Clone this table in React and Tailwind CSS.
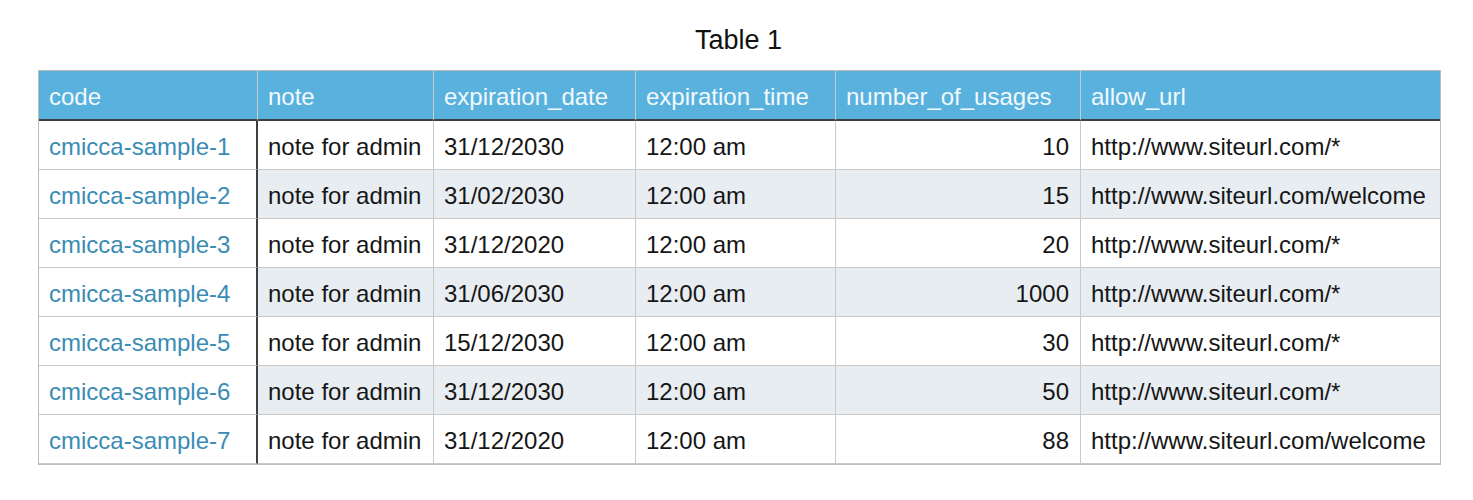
import React from 'react'

const columns = [
  { key: 'code', label: 'code', width: 'w-[219px]' },
  { key: 'note', label: 'note', width: 'w-[176px]' },
  { key: 'date', label: 'expiration_date', width: 'w-[202px]' },
  { key: 'time', label: 'expiration_time', width: 'w-[200px]' },
  { key: 'uses', label: 'number_of_usages', width: 'w-[245px]' },
  { key: 'url', label: 'allow_url', width: 'w-[359px]' },
]

const rows = [
  ['cmicca-sample-1', 'note for admin', '31/12/2030', '12:00 am', '10', 'http://www.siteurl.com/*'],
  ['cmicca-sample-2', 'note for admin', '31/02/2030', '12:00 am', '15', 'http://www.siteurl.com/welcome'],
  ['cmicca-sample-3', 'note for admin', '31/12/2020', '12:00 am', '20', 'http://www.siteurl.com/*'],
  ['cmicca-sample-4', 'note for admin', '31/06/2030', '12:00 am', '1000', 'http://www.siteurl.com/*'],
  ['cmicca-sample-5', 'note for admin', '15/12/2030', '12:00 am', '30', 'http://www.siteurl.com/*'],
  ['cmicca-sample-6', 'note for admin', '31/12/2030', '12:00 am', '50', 'http://www.siteurl.com/*'],
  ['cmicca-sample-7', 'note for admin', '31/12/2020', '12:00 am', '88', 'http://www.siteurl.com/welcome'],
]

function Cell({ col, value, striped }) {
  if (col === 0) {
    return (
      <td className="h-[49px] border-r-[2px] border-b border-r-[#3f3f3f] border-b-[#c9c9c9] bg-white pt-[4px] pl-[10px] text-[#3a8cb4]">
        {value}
      </td>
    )
  }
  return (
    <td
      className={
        (striped ? 'bg-[#e8edf2] ' : 'bg-white ') +
        (col === 4 ? 'pr-[11px] text-right ' : 'pl-[10px] ') +
        (col === 5 ? 'border-b border-b-[#c9c9c9] ' : 'border-r border-b border-[#c9c9c9] ') +
        'h-[49px] whitespace-nowrap pt-[4px] text-[#161616]'
      }
    >
      {value}
    </td>
  )
}

export default function App() {
  return (
    <div className="min-h-[500px] bg-white pt-[25px] font-['Liberation_Sans',Arial,sans-serif]">
      <div className="ml-[38px] w-[1401px]">
        <h1 className="mb-[14px] h-[31px] text-center text-[27px] leading-[31px] text-[#111]">Table 1</h1>
        <table className="w-[1401px] table-fixed border-separate border-spacing-0 border border-[#bdbdbd] text-[24px] leading-none">
          <colgroup>
            {columns.map((c) => (
              <col key={c.key} className={c.width} />
            ))}
          </colgroup>
          <thead>
            <tr>
              {columns.map((c, i) => (
                <th
                  key={c.key}
                  className={
                    (i < columns.length - 1 ? 'border-r border-r-[#c9c9c9] ' : '') +
                    'h-[50px] border-b-[2px] border-b-[#3f3f3f] bg-[#59b2dd] pt-[4px] pl-[10px] text-left font-normal text-[#f2f9fd]'
                  }
                >
                  {c.label}
                </th>
              ))}
            </tr>
          </thead>
          <tbody>
            {rows.map((r, ri) => (
              <tr key={r[0]}>
                {r.map((v, ci) => (
                  <Cell key={ci} col={ci} value={v} striped={ri % 2 === 1} />
                ))}
              </tr>
            ))}
          </tbody>
        </table>
      </div>
    </div>
  )
}
